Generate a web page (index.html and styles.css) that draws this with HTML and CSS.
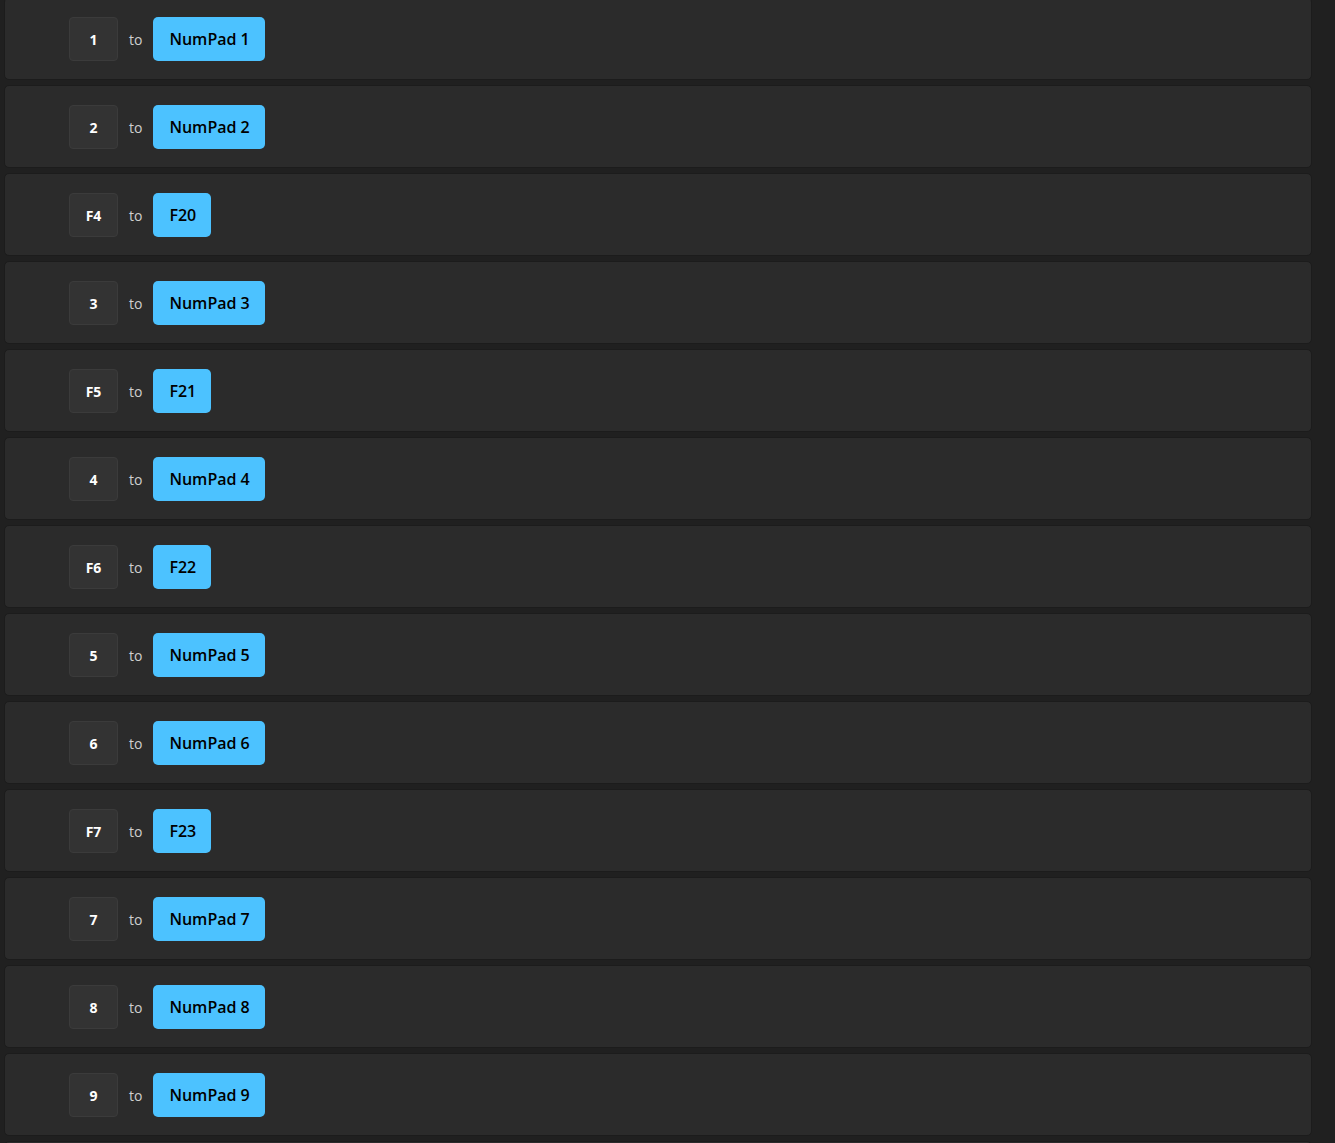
FILE: index.html
```html
<!DOCTYPE html>
<html>
<head>
<meta charset="utf-8">
<link rel="stylesheet" href="styles.css">
</head>
<body>
<div class="list">
  <div class="row"><span class="key">1</span><span class="to">to</span><span class="target">NumPad 1</span></div>
  <div class="row"><span class="key">2</span><span class="to">to</span><span class="target">NumPad 2</span></div>
  <div class="row"><span class="key">F4</span><span class="to">to</span><span class="target">F20</span></div>
  <div class="row"><span class="key">3</span><span class="to">to</span><span class="target">NumPad 3</span></div>
  <div class="row"><span class="key">F5</span><span class="to">to</span><span class="target">F21</span></div>
  <div class="row"><span class="key">4</span><span class="to">to</span><span class="target">NumPad 4</span></div>
  <div class="row"><span class="key">F6</span><span class="to">to</span><span class="target">F22</span></div>
  <div class="row"><span class="key">5</span><span class="to">to</span><span class="target">NumPad 5</span></div>
  <div class="row"><span class="key">6</span><span class="to">to</span><span class="target">NumPad 6</span></div>
  <div class="row"><span class="key">F7</span><span class="to">to</span><span class="target">F23</span></div>
  <div class="row"><span class="key">7</span><span class="to">to</span><span class="target">NumPad 7</span></div>
  <div class="row"><span class="key">8</span><span class="to">to</span><span class="target">NumPad 8</span></div>
  <div class="row"><span class="key">9</span><span class="to">to</span><span class="target">NumPad 9</span></div>
  <div class="row"></div>
</div>
</body>
</html>
```
FILE: styles.css
```css
html, body {
  margin: 0;
  padding: 0;
  background: #202020;
  overflow: hidden;
  height: 1143px;
}
body {
  font-family: "Open Sans", "Noto Sans", sans-serif;
}
.list {
  display: flex;
  flex-direction: column;
  gap: 5px;
  width: 1308px;
  margin: -3px 0 0 4px;
}
.row {
  box-sizing: border-box;
  height: 83px;
  background: #2b2b2b;
  border: 1px solid #1c1c1c;
  border-radius: 5px;
  display: flex;
  align-items: center;
  padding-left: 64px;
  padding-top: 1px;
}
.key {
  box-sizing: border-box;
  min-width: 49px;
  height: 44px;
  padding: 0 10px;
  display: flex;
  align-items: center;
  justify-content: center;
  background: #333333;
  border: 1px solid #3b3b3b;
  border-radius: 4px;
  color: #ffffff;
  font-weight: 700;
  font-size: 14px;
}
.to {
  color: #cfcfcf;
  font-size: 14px;
  margin: 0 11px 0 11px;
}
.target {
  box-sizing: border-box;
  height: 44px;
  padding: 0 15px 0 16px;
  display: flex;
  align-items: center;
  background: #4cc2ff;
  border-radius: 5px;
  color: #000000;
  font-weight: 600;
  font-size: 16px;
}
```
